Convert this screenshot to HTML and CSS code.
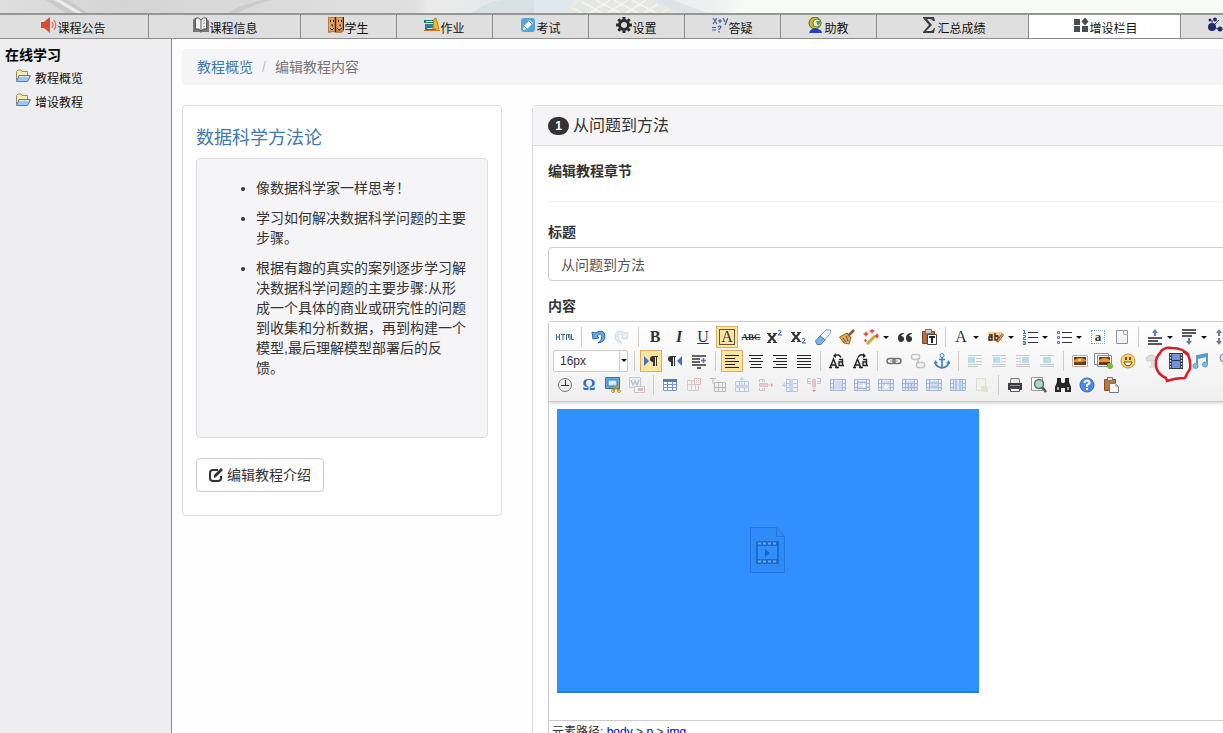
FILE: index.html
```html
<!DOCTYPE html>
<html lang="zh-CN">
<head>
<meta charset="utf-8">
<title>增设栏目</title>
<link rel="stylesheet" href="styles.css">
</head>
<body>
<svg class="defs" aria-hidden="true">
  <symbol id="grid" viewBox="0 0 16 16"><path fill="#e3eaf8" d="M0 2h16v12H0z"/><path fill="none" stroke="#93a9d0" d="M.500 2.500h15v11H.500zM3.500 2v12M12.500 2v12M0 6.500h3M0 10.500h3M13 6.500h3M13 10.500h3"/><path fill="#cbd7ee" d="M4 4h8v8H4z"/></symbol>
  <symbol id="folder" viewBox="0 0 16 14"><path fill="#f8edb0" stroke="#9a9160" d="M1.500 11V2.500L3 1h3l1 1.500h5.500V6"/><path fill="#9ccaf7" stroke="#4a7db5" d="M1.500 12.500L4 6.500h11.500L12.500 12.500z"/><path stroke="#d6ecff" d="M4.500 7.500h9"/></symbol>
</svg>
<header>
  <svg class="banner" viewBox="0 0 1223 13" preserveAspectRatio="none" aria-hidden="true">
    <defs><linearGradient id="bg"><stop offset="0" stop-color="#dedede"/><stop offset=".1" stop-color="#d4d4d4"/><stop offset=".2" stop-color="#dadada"/><stop offset=".34" stop-color="#e0e0e0"/><stop offset=".35" stop-color="#ebebeb"/><stop offset=".4" stop-color="#e6e9ea"/><stop offset=".58" stop-color="#edf0f0"/><stop offset=".61" stop-color="#f7faf6"/><stop offset="1" stop-color="#f8faf8"/></linearGradient></defs>
    <path fill="url(#bg)" d="M0 0h1223v13H0z"/>
    <path fill="#c9c9c9" d="M46 0h8l22 13H66zM62 0h6l20 13h-6z"/><path fill="#ececec" d="M54 0h6l22 13h-6z"/>
    <path fill="#cccccc" d="M228 13q14-9 34-13h10q-20 5-34 13z"/>
    <path fill="#d9e0e4" d="M472 13q12-10 28-13h34v13z"/><path fill="#e0e8ed" d="M534 0h42l-14 13h-28z"/><path fill="#dde3e6" d="M652 0h20l36 13h-30z"/>
    <path fill="#e5e7e1" d="M560 13L582 0h70l26 13z"/><path fill="none" stroke="#f4f5f0" stroke-width="1.500" d="M572 8l10 5M582 2l20 11M596 0l24 13M614 0l24 13M632 0l24 13M590 13l20-13M608 13l20-13M626 13l20-13M644 13l14-9M662 13l6-4"/>
  </svg>
  <nav class="tabs" aria-label="课程">
    <a class="tab wide" href="#"><svg viewBox="0 0 16 16"><path fill="#dc4b35" d="M0 5h3l6-5v16l-6-5H0z"/><path fill="none" stroke="#e0705c" stroke-width="1.300" d="M11 5q2 3 0 6M13 3q3.500 5 0 10"/></svg><span>课程公告</span></a>
    <a class="tab wide" href="#"><svg viewBox="0 0 16 16"><path fill="#777" d="M0 3l2-2v11h12V2l2 2v11H9l-1 1-1-1H0z"/><path fill="#f4f4f4" stroke="#555" d="M2.500 1Q6 0 8 3q2-3 5.500-2v11Q10 11 8 14q-2-3-5.500-2z"/><path stroke="#555" d="M8 3v11"/><path stroke="#aaa" d="M10 4l2-1M10 7l2-1M10 10l2-1"/></svg><span>课程信息</span></a>
    <a class="tab" href="#"><svg viewBox="0 0 16 16"><path fill="#b87b40" d="M0 0h16v14l-3 2H8l-3-1-5 1z"/><path fill="#e0a566" d="M1 1h5v13H1zM9 1h5v12H9z"/><path fill="none" stroke="#3b2212" d="M7.500 0v15M15.500 0v13M2.500 3v2M5.500 3v2M10.500 3v2M13.500 3v2M4 7v2h1M12 7v2h1M2 11l2 2 2-2M9 11l2 2 3-2"/></svg><span>学生</span></a>
    <a class="tab" href="#"><svg viewBox="0 0 16 16"><path fill="#247b64" d="M0 3h10v3H0zM1 10h11v3H1z"/><path fill="#2f7f98" d="M1 7h9v3H1z"/><path fill="#d8ead8" d="M2 4h7v1H2zM3 11h7v1H3z"/><path fill="#f3ba28" stroke="#b9802a" d="M10 2l2-1 3 11H9z"/><path fill="#d8702c" d="M0 13h16v1H0z"/></svg><span>作业</span></a>
    <a class="tab" href="#"><svg viewBox="0 0 16 16"><rect x="1" y="1" width="14" height="14" rx="3" fill="#55a5dc"/><path fill="#fff" d="M4 9l6-6 3 3-6 6-4 1z"/><path stroke="#55a5dc" d="M4 9l3 3M9 4l3 3"/></svg><span>考试</span></a>
    <a class="tab" href="#"><svg viewBox="0 0 16 16"><circle cx="8" cy="8" r="4.500" fill="none" stroke="#2d2d31" stroke-width="3"/><path stroke="#2d2d31" stroke-width="3" d="M8 0v3M8 13v3M0 8h3M13 8h3M2.300 2.300l2 2M11.700 11.700l2 2M13.700 2.300l-2 2M2.300 13.700l2-2"/></svg><span>设置</span></a>
    <a class="tab" href="#"><svg viewBox="0 0 16 16"><path fill="none" stroke="#3d5c99" stroke-width="1.200" d="M1 1l4 6M5 1L1 7M6 4h4M8 2v4M11 1l2 4M16 1l-3 7M0 10.500h4M0 13h4M6 10q2-2 3 0 0 1-2 2v1M7 14v1.500"/></svg><span>答疑</span></a>
    <a class="tab" href="#"><svg viewBox="0 0 16 16"><circle cx="7" cy="6" r="6" fill="#c5b535" stroke="#6c671c"/><circle cx="9" cy="6" r="4" fill="#e8eed9" stroke="#678256"/><path fill="#1e46b8" d="M1 16q1-4 6-5l3 1q4 1 4 4z"/><path fill="#5f9e4b" d="M8 4h4v3l-2 2z"/></svg><span>助教</span></a>
    <a class="tab wide" href="#"><svg viewBox="0 0 16 16"><path fill="#3c3e46" d="M2 0h11l1 4h-2q-1-2-3-2H6l5 6-6 6h5q2 0 3-3h1l-1 5H2v-1l6-7-6-7z"/></svg><span>汇总成绩</span></a>
    <a class="tab wide active" href="#" aria-current="page"><svg viewBox="0 0 16 16"><path fill="#474b54" d="M1 2h6v6H1zM1 9h6v6H1zM9 9h6v6H9zM12 .500L15.500 4.500 12 8.500 8.500 4.500z"/></svg><span>增设栏目</span></a>
    <a class="tab last" href="#" aria-label="更多"><svg viewBox="0 0 16 16"><path stroke="#26326e" d="M5 10l7-7M5 10V3M5 10l10 3"/><circle cx="5" cy="10" r="4" fill="#202b72"/><circle cx="3" cy="3" r="1.500" fill="#202b72"/><circle cx="8" cy="2.500" r="2" fill="#202b72"/><circle cx="13" cy="12" r="2.500" fill="#202b72"/></svg></a>
  </nav>
</header>
<div class="shell">
  <aside class="sidebar">
    <h2>在线学习</h2>
    <a href="#"><svg viewBox="0 0 16 14"><use href="#folder"/></svg>教程概览</a>
    <a href="#"><svg viewBox="0 0 16 14"><use href="#folder"/></svg>增设教程</a>
  </aside>
  <main>
    <nav class="breadcrumb" aria-label="位置"><a href="#">教程概览</a><span class="slash">/</span><span>编辑教程内容</span></nav>
    <div class="columns">
      <section class="intro">
        <h3><a href="#">数据科学方法论</a></h3>
        <div class="well">
          <ul>
            <li>像数据科学家一样思考！</li>
            <li>学习如何解决数据科学问题的主要步骤。</li>
            <li>根据有趣的真实的案列逐步学习解决数据科学问题的主要步骤:从形成一个具体的商业或研究性的问题到收集和分析数据，再到构建一个模型,最后理解模型部署后的反馈。</li>
          </ul>
        </div>
        <button class="edit" type="button"><svg viewBox="0 0 14 14"><path fill="none" stroke="#333" stroke-width="2" d="M9 2H4Q1 2 1 5v5q0 3 3 3h5q3 0 3-3V8"/><path fill="#333" d="M5 10V7l6-6 2 2-6 6zM12 0l2 2-1 1-2-2z"/></svg>编辑教程介绍</button>
      </section>
      <section class="panel">
        <h3 class="panel-head"><span class="badge">1</span>从问题到方法</h3>
        <form class="panel-body">
          <h4>编辑教程章节</h4>
          <hr>
          <label for="title">标题</label>
          <input id="title" type="text" value="从问题到方法">
          <label for="content">内容</label>
          <div class="editor">
            <div class="toolbar">
              <div class="row">
                <button type="button" aria-label="HTML"><svg class="html" viewBox="0 0 18 16"><path fill="none" stroke="#35708a" d="M.500 5v6M3.500 5v6M0 8h4M5 5.500h4M7 5v6M10.500 11V5.500h3.500V11M12.500 6v3M15.500 5v5.500H18"/></svg></button>
                <i class="sep"></i>
                <button type="button" aria-label="撤销"><svg viewBox="0 0 16 16"><path fill="#68a6e8" stroke="#2f6cad" d="M2 3l1 7 6-1-2-2q4-4 5 0 0 4-4 7 7-1 7-7-1-8-10-3z"/></svg></button>
                <button type="button" class="dim" aria-label="重做"><svg viewBox="0 0 16 16"><path fill="#c8dbed" stroke="#8ba8c4" d="M14 3l-1 7-6-1 2-2Q5 3 4 7q0 4 4 7-7-1-7-7 1-8 10-3z"/></svg></button>
                <i class="sep"></i>
                <button type="button" class="ltr"><b>B</b></button>
                <button type="button" class="ltr"><b><em>I</em></b></button>
                <button type="button" class="ltr"><u>U</u></button>
                <button type="button" class="ltr on" aria-pressed="true"><span class="boxed">A</span></button>
                <button type="button" class="ltr small"><s>ABC</s></button>
                <button type="button" aria-label="上标"><svg viewBox="0 0 16 16"><path stroke="#333" stroke-width="2" d="M1.500 5l7 8M8.500 5l-7 8"/><path stroke="#333" d="M0 4.500h4M6 4.500h4M0 13.500h4M6 13.500h4"/><path fill="none" stroke="#4054b0" d="M11 2q3-2 3 1l-3 3h4"/></svg></button>
                <button type="button" aria-label="下标"><svg viewBox="0 0 16 16"><path stroke="#333" stroke-width="2" d="M1.500 4l7 8M8.500 4l-7 8"/><path stroke="#333" d="M0 3.500h4M6 3.500h4M0 12.500h4M6 12.500h4"/><path fill="none" stroke="#4054b0" d="M11 10q3-2 3 1l-3 3h4"/></svg></button>
                <button type="button" aria-label="清除格式"><svg viewBox="0 0 16 16"><path fill="#f7f9fb" stroke="#8a9fb4" d="M5 7l6-6h4.500v3L10 11z"/><path fill="#7ab2e8" stroke="#4d80b5" d="M.500 12L5 7l5 4-4 4.500H2z"/></svg></button>
                <button type="button" aria-label="格式刷"><svg viewBox="0 0 16 16"><path stroke="#8a552a" stroke-width="2.500" d="M10 6l5-5"/><path fill="#dba951" stroke="#9c6c2b" d="M.500 8L8 4l4 5-2 6-5-1z"/><path stroke="#7c5321" d="M4 9l3 4M7 7l2 5M8 4l4 5"/></svg></button>
                <button type="button" class="combo" aria-label="自动排版"><svg viewBox="0 0 16 16"><path stroke="#d2a242" stroke-width="3" d="M4 15l8-8"/><path fill="#e04929" d="M3 2l1 2 2 1-2 1-1 2-1-2-2-1 2-1zM9 0l1 1 2 1-2 1-1 2-1-2-2-1 2-1zM14 4l1 2 1 1-1 1-1 2-1-2-2-1 2-1zM2 10l2 1-1 2-2-1z"/></svg><i class="caret"></i></button>
                <button type="button" aria-label="引用"><svg viewBox="0 0 16 16"><path fill="#333" d="M7 4Q1 4 1 9q0 4 3 4t3-3-3-3q1-2 3-2zM15 4Q9 4 9 9q0 4 3 4t3-3-3-3q1-2 3-2z"/></svg></button>
                <button type="button" aria-label="纯文本粘贴"><svg viewBox="0 0 16 16"><path fill="#b66e3a" stroke="#7a4422" d="M1.500 2.500h12v12h-12z"/><path fill="#ccc" stroke="#777" d="M4.500.500h6v4h-6z"/><path fill="#fff" stroke="#444" d="M6.500 5.500h9v10h-9z"/><path stroke="#222" stroke-width="2" d="M8 8h6M11 8v6"/></svg></button>
                <i class="sep"></i>
                <button type="button" class="combo ltr">A<i class="caret"></i></button>
                <button type="button" class="combo" aria-label="背景色"><svg viewBox="0 0 16 16"><path fill="#f5d08e" d="M0 3h14v9H0z"/><path fill="none" stroke="#222" stroke-width="1.300" d="M1 6h3v5H1V8h3M7 4v7h3V7H7"/><path stroke="#a14c20" stroke-width="2.500" d="M9 13l6-8"/><path stroke="#f2ba68" d="M10 12l5-7"/></svg><i class="caret"></i></button>
                <button type="button" class="combo" aria-label="有序列表"><svg viewBox="0 0 16 16"><path stroke="#333" d="M6 3.500h10M6 8.500h10M6 13.500h10"/><path fill="none" stroke="#456bc0" d="M1 1.500h1.500v3M1 4.500h3M1 6.500h2.500v2H1.500v2H4M1 12.500h2.500v3H1M1 14h2"/></svg><i class="caret"></i></button>
                <button type="button" class="combo" aria-label="无序列表"><svg viewBox="0 0 16 16"><path stroke="#333" d="M6 3.500h10M6 8.500h10M6 13.500h10"/><path fill="none" stroke="#6078c0" d="M1.500 2.500h2v2h-2zM1.500 7.500h2v2h-2zM1.500 12.500h2v2h-2z"/></svg><i class="caret"></i></button>
                <button type="button" class="ltr small"><span class="dotted">a</span></button>
                <button type="button" aria-label="清空文档"><svg viewBox="0 0 16 16"><path fill="#f2f3f4" stroke="#909498" d="M2.500 1.500h11v13h-11z"/><path fill="#fff" stroke="#b0b4b8" d="M9.500 1.500v4h4"/></svg></button>
                <i class="sep"></i>
                <button type="button" class="combo" aria-label="段前距"><svg viewBox="0 0 16 16"><path stroke="#222" stroke-width="1.500" d="M1 9h14M1 12h10M1 15h14"/><path fill="#6478b4" d="M7 7V4H5l3-4 3 4H9v3z"/></svg><i class="caret"></i></button>
                <button type="button" class="combo" aria-label="段后距"><svg viewBox="0 0 16 16"><path stroke="#222" stroke-width="1.500" d="M1 1h14M1 4h14M1 7h10"/><path fill="#6478b4" d="M7 9v3H5l3 4 3-4H9V9z"/></svg><i class="caret"></i></button>
                <button type="button" class="combo" aria-label="行间距"><svg viewBox="0 0 16 16"><path fill="#6478b4" d="M3 7V4H1l3-4 3 4H5v3zM3 9v3H1l3 4 3-4H5V9z"/><path stroke="#222" d="M9 2.500h7M9 7.500h7M9 12.500h7"/></svg><i class="caret"></i></button>
              </div>
              <div class="row">
                <span class="size"><select aria-label="字号"><option>16px</option></select><i class="caret"></i></span>
                <i class="sep"></i>
                <button type="button" class="on" aria-label="从左向右输入"><svg viewBox="0 0 16 16"><path fill="#3f72c2" d="M1 3l5 5-5 5z"/><path fill="#333" d="M10 9q-3 0-3-3t3-3h5v1h-1v9h-1V4h-1v9h-2z"/></svg></button>
                <button type="button" aria-label="从右向左输入"><svg viewBox="0 0 16 16"><path fill="#3f72c2" d="M15 3l-5 5 5 5z"/><path fill="#333" d="M4 9Q1 9 1 6t3-3h5v1H8v9H7V4H6v9H4z"/></svg></button>
                <button type="button" aria-label="首行缩进"><svg viewBox="0 0 16 16"><path stroke="#333" stroke-width="1.400" d="M1 3h14M1 6h8M1 9h8M1 12h14M6 15h4"/><path stroke="#6d6bb0" stroke-width="1.500" d="M10 7.500h5M12.500 5v5"/></svg></button>
                <i class="sep"></i>
                <button type="button" class="on" aria-label="左对齐"><svg viewBox="0 0 16 16"><path stroke="#222" d="M1 2.500h14M1 5.500h10M1 8.500h14M1 11.500h10M1 14.500h14"/></svg></button>
                <button type="button" aria-label="居中"><svg viewBox="0 0 16 16"><path stroke="#222" d="M1 2.500h14M3 5.500h10M1 8.500h14M3 11.500h10M2 14.500h12"/></svg></button>
                <button type="button" aria-label="右对齐"><svg viewBox="0 0 16 16"><path stroke="#222" d="M1 2.500h14M4 5.500h11M1 8.500h14M4 11.500h11M1 14.500h14"/></svg></button>
                <button type="button" aria-label="两端对齐"><svg viewBox="0 0 16 16"><path stroke="#222" d="M1 2.500h14M1 5.500h14M1 8.500h14M1 11.500h14M1 14.500h14"/></svg></button>
                <i class="sep"></i>
                <button type="button" aria-label="转大写"><svg viewBox="0 0 16 16"><path fill="none" stroke="#222" stroke-width="1.400" d="M1 15l3.500-9L8 15M2.500 12h4M0 14.500h3M6 14.500h4M10 6.500h3.500v6H15M13 9h-3v3.500h3M6 2.500q4-2 6 2"/><path fill="#222" d="M4 3l3-3v5z"/></svg></button>
                <button type="button" aria-label="转小写"><svg viewBox="0 0 16 16"><path fill="none" stroke="#222" stroke-width="1.400" d="M1 15l3.500-9L8 15M2.500 12h4M0 14.500h3M6 14.500h4M10 6.500h3.500v6H15M13 9h-3v3.500h3M5 4.500q2-4 6-2"/><path fill="#222" d="M13 3l-3-3v5z"/></svg></button>
                <i class="sep"></i>
                <button type="button" aria-label="链接"><svg viewBox="0 0 16 16"><rect x="1" y="5.500" width="8" height="5" rx="2.500" fill="none" stroke="#6e7074" stroke-width="1.500"/><rect x="7" y="5.500" width="8" height="5" rx="2.500" fill="none" stroke="#6e7074" stroke-width="1.500"/><path stroke="#999" d="M4 8h8"/></svg></button>
                <button type="button" class="dim" aria-label="取消链接"><svg viewBox="0 0 16 16"><rect x="1.500" y="1.500" width="8" height="5" rx="2" fill="none" stroke="#777" stroke-width="1.500"/><rect x="6.500" y="9.500" width="8" height="5" rx="2" fill="none" stroke="#777" stroke-width="1.500"/><path stroke="#777" stroke-width="1.500" d="M8 5v6"/></svg></button>
                <button type="button" aria-label="锚点"><svg viewBox="0 0 16 16"><circle cx="8" cy="2.500" r="2" fill="none" stroke="#3f80be"/><path fill="none" stroke="#3f80be" stroke-width="1.600" d="M8 4v11M5 6.500h6M1 9q1 5 7 6 6-1 7-6"/><path fill="#3f80be" d="M0 11l1-4 3 3zM16 11l-1-4-3 3z"/></svg></button>
                <i class="sep"></i>
                <button type="button" class="dim" aria-label="默认"><svg viewBox="0 0 16 16"><path stroke="#789" d="M1 2.500h14M9 5.500h6M9 8.500h6M1 11.500h14M1 13.500h10"/><path fill="#61b9ca" d="M1 4h7v6H1z"/></svg></button>
                <button type="button" class="dim" aria-label="左浮动"><svg viewBox="0 0 16 16"><path stroke="#789" d="M1 2.500h14M10 5.500h5M10 8.500h5M1 11.500h14M1 13.500h14"/><path fill="#61b9ca" d="M2 4h7v6H2z"/></svg></button>
                <button type="button" class="dim" aria-label="右浮动"><svg viewBox="0 0 16 16"><path stroke="#789" d="M1 2.500h14M1 5.500h5M1 8.500h5M1 11.500h14M1 13.500h14"/><path fill="#61b9ca" d="M7 4h7v6H7z"/></svg></button>
                <button type="button" class="dim" aria-label="图片居中"><svg viewBox="0 0 16 16"><path stroke="#789" d="M1 2.500h14M1 11.500h14M1 13.500h14"/><path fill="#61b9ca" d="M4 4h8v6H4z"/></svg></button>
                <i class="sep"></i>
                <button type="button" aria-label="单图上传"><svg viewBox="0 0 16 16"><path fill="#fff" stroke="#c9b09a" d="M.500 2.500h15v11H.500z"/><path fill="#71351a" d="M2 4h12v8H2z"/><path fill="#e48b2d" d="M2 7q6-4 12 0v1q-6 2-12 1z"/><path fill="#ffd865" d="M6 6h3v2H6z"/></svg></button>
                <button type="button" aria-label="多图上传"><svg class="photos" viewBox="0 0 20 16"><path fill="#fff" stroke="#888" d="M.500.500h14v11H.500zM3.500 2.500h14v11h-14z"/><path fill="#71351a" d="M5 4h11v8H5z"/><path fill="#eb9735" d="M5 7q6-4 11 0v2H5z"/><circle cx="16" cy="13" r="3" fill="#75bd3c"/></svg></button>
                <button type="button" aria-label="表情"><svg viewBox="0 0 16 16"><circle cx="8" cy="8" r="7" fill="#fbd36b" stroke="#cf923a"/><path fill="#704719" d="M5 4h2v3H5zM9 4h2v3H9z"/><path fill="#fff" stroke="#704719" d="M4 9h8q-1 4-4 4T4 9z"/></svg></button>
                <button type="button" class="dim" aria-label="涂鸦"><svg viewBox="0 0 16 16"><path fill="#b8b8b8" stroke="#888" d="M2 5q5-6 11 0l-2 3H3z"/><path fill="#bbb" d="M7 8h3v6H7zM5 13h8v2H5z"/></svg></button>
                <button type="button" class="marked" aria-label="视频"><svg viewBox="0 0 16 16"><path fill="#333a4a" d="M1 0h14v16H1z"/><path fill="#7191da" d="M4 1h8v6H4zM4 8h8v7H4z"/><path stroke="#fff" stroke-width="1.300" stroke-dasharray="1.500 1.500" d="M2.500 1v14M13.500 1v14"/></svg><svg class="ring" viewBox="0 0 38 38"><path fill="none" stroke="#d81e28" stroke-width="2.500" stroke-linejoin="round" d="M35 10Q30 2 18 2 9 1 6 7 1 12 2 20q1 8 10 12l1 3q8-3 18-3 2-5 5-9 1-8-2-14l-5-4"/></svg></button>
                <button type="button" aria-label="音乐"><svg viewBox="0 0 16 16"><path fill="none" stroke="#569fca" stroke-width="2" d="M5 13V3l10-2v10M5 5l10-2"/><circle cx="3.500" cy="13" r="2.500" fill="#80bfe4" stroke="#569fca"/><circle cx="13" cy="11.500" r="2.500" fill="#80bfe4" stroke="#569fca"/></svg></button>
                <button type="button" aria-label="地图"><svg viewBox="0 0 16 16"><circle cx="8" cy="5" r="4" fill="#d8e3fc" stroke="#6783cb"/><path stroke="#6783cb" d="M8 9v6"/></svg></button>
              </div>
              <div class="row">
                <button type="button" aria-label="时间"><svg viewBox="0 0 16 16"><circle cx="8" cy="8" r="6.500" fill="#ececec" stroke="#777"/><path fill="none" stroke="#333" d="M8.500 3v5.500H4M8 8.500h4"/></svg></button>
                <button type="button" class="omega">Ω</button>
                <button type="button" aria-label="截图"><svg viewBox="0 0 16 16"><path fill="#60aee1" stroke="#396f9c" d="M.500.500h14v11H.500z"/><path fill="#ccecff" stroke="#367fae" d="M3 3h9v6H3z"/><path stroke="#c89122" stroke-width="1.500" d="M8 8l6 6M14 8l-6 6"/><circle cx="8" cy="14" r="1.500" fill="none" stroke="#c89122"/><circle cx="14" cy="14" r="1.500" fill="none" stroke="#c89122"/></svg></button>
                <button type="button" class="dim" aria-label="图片转存"><svg viewBox="0 0 16 16"><path fill="#dcebf8" stroke="#719ac2" d="M.500.500h11v10H.500z"/><path fill="none" stroke="#4679af" stroke-width="1.300" d="M2 3l2 5 2-4 2 4 2-5"/><path fill="#fff" stroke="#888" d="M5.500 9.500h10v6h-10z"/><path fill="#c66" d="M9 11h5v3H9z"/></svg></button>
                <i class="sep"></i>
                <button type="button" aria-label="插入表格"><svg viewBox="0 0 16 16"><path fill="#fff" stroke="#7b96ca" d="M1.500 2.500h13v11h-13zM5.500 3v10M10.500 3v10M2 7.500h12M2 10.500h12"/><path fill="#537bc7" d="M1 2h14v3H1z"/></svg></button>
                <button type="button" class="dim" aria-label="删除表格"><svg viewBox="0 0 16 16"><path fill="none" stroke="#99a" d="M1.500 3.500h11v10h-11zM5.500 3v10M9.500 3v10M2 7.500h10"/><path fill="#fbe4e4" stroke="#d46a6a" d="M8.500 1.500h6v6h-6zM10 3l3 3M13 3l-3 3"/></svg></button>
                <button type="button" class="dim" aria-label="表前行"><svg viewBox="0 0 16 16"><path fill="none" stroke="#667" d="M0 1.500h6M3 1v6M4.500 5.500h11v9h-11zM8.500 5v10M12.500 5v10M4 10.500h12"/></svg></button>
                <button type="button" class="dim" aria-label="前插入行"><svg viewBox="0 0 16 16"><path fill="none" stroke="#678bba" d="M1.500 4.500h13v10h-13zM5.500 4v11M10.500 4v11M8 0v8"/><path fill="#7aaedc" d="M1 8h14v3H1zM5 3l3-3 3 3z"/></svg></button>
                <button type="button" class="dim" aria-label="删除行"><svg viewBox="0 0 16 16"><path fill="none" stroke="#887f96" d="M1.500 5V2.500h5V5M1.500 11v2.500h5V11M4.500 2v3M4.500 11v3"/><path fill="#ee8d96" stroke="#d46a76" d="M1.500 6.500h8v3h-8z"/><path stroke="#d46a76" d="M10 8h5M13 6l2 2-2 2"/></svg></button>
                <button type="button" class="dim" aria-label="前插入列"><svg viewBox="0 0 16 16"><path fill="none" stroke="#5a82b5" d="M4.500 2.500h11v12h-11zM5 6.500h10M5 10.500h10M0 8.500h5"/><path fill="#7aaedc" d="M7 2h4v12H7zM0 8l3-3v6z"/></svg></button>
                <button type="button" class="dim" aria-label="删除列"><svg viewBox="0 0 16 16"><path fill="none" stroke="#887f96" d="M5 1.500H1.500v5H5M11 1.500h3.500v5H11M1 4.500h4M11 4.500h4"/><path fill="#ee8d96" stroke="#d46a76" d="M6.500 2.500h3v7h-3z"/><path stroke="#d46a76" d="M8 10v5M6 13l2 2 2-2"/></svg></button>
                <button type="button" class="grid" aria-label="合并单元格"><svg viewBox="0 0 16 16"><use href="#grid"/></svg></button>
                <button type="button" class="grid" aria-label="右合并"><svg viewBox="0 0 16 16"><use href="#grid"/><path stroke="#93a9d0" d="M4 5.500h8M4 11.500h8"/><path fill="#fff" d="M5 8h4V6l3 2.500L9 11V9H5z"/></svg></button>
                <button type="button" class="grid" aria-label="下合并"><svg viewBox="0 0 16 16"><use href="#grid"/><path stroke="#93a9d0" d="M4 6.500h8"/><path fill="#fff" d="M7 7h2v2h2l-3 3-3-3h2z"/></svg></button>
                <button type="button" class="grid" aria-label="拆分单元格"><svg viewBox="0 0 16 16"><use href="#grid"/><path stroke="#8ba3cc" d="M6.500 6v8M9.500 6v8M1 6.500h14M1 10.500h14"/></svg></button>
                <button type="button" class="grid" aria-label="拆分行"><svg viewBox="0 0 16 16"><use href="#grid"/><path fill="#9dc3e6" d="M4 5h8v2H4zM4 9h8v2H4z"/></svg></button>
                <button type="button" class="grid" aria-label="拆分列"><svg viewBox="0 0 16 16"><use href="#grid"/><path stroke="#9dc3e6" stroke-width="2" d="M6 3v10M10 3v10"/></svg></button>
                <button type="button" class="dim" aria-label="图表"><svg viewBox="0 0 16 16"><path fill="#f4f4df" stroke="#bbb" d="M2.500 1.500h9v12h-9z"/><path fill="#c9d795" d="M7 9h7v6H7z"/></svg></button>
                <i class="sep"></i>
                <button type="button" aria-label="打印"><svg viewBox="0 0 16 16"><path fill="#e9e9e9" stroke="#777" d="M4 1.500h8l1 6H3z"/><path fill="#3b3d40" d="M1 6h14v7H1z"/><path fill="#fff" stroke="#555" d="M3.500 11.500h9v3h-9z"/><path stroke="#999" d="M3 8.500h10"/></svg></button>
                <button type="button" aria-label="预览"><svg viewBox="0 0 16 16"><path fill="#fff" stroke="#999" d="M.500.500h11v13H.500z"/><circle cx="8" cy="7" r="4.500" fill="#afd8bd" stroke="#537674" stroke-width="1.500"/><path stroke="#555" stroke-width="2.500" d="M11 10l4 5"/></svg></button>
                <button type="button" aria-label="查找替换"><svg viewBox="0 0 16 16"><path fill="#252628" d="M2 1h4v4l1 1h2l1-1V1h4v4l2 5v5h-6v-4H6v4H0v-5l2-5z"/><path fill="#aaa" d="M2 10h2v3H2zM12 10h2v3h-2z"/></svg></button>
                <button type="button" aria-label="帮助"><svg viewBox="0 0 16 16"><circle cx="8" cy="8" r="7" fill="#4b8be7" stroke="#2868c3"/><path fill="none" stroke="#fff" stroke-width="2" d="M5.500 6q0-2.500 2.500-2.500T10.500 6Q10 7 8 8v2M8 11v2"/></svg></button>
                <button type="button" aria-label="粘贴"><svg viewBox="0 0 16 16"><path fill="#ba743e" stroke="#84502a" d="M1.500 2.500h11v11h-11z"/><path fill="#ddd" stroke="#777" d="M4.500.500h5v3h-5z"/><path fill="#fff" stroke="#777" d="M6.500 6.500h6l3 3v6h-9z"/><path fill="#bbb" d="M12 6v4h4z"/></svg></button>
              </div>
            </div>
            <div class="canvas" id="content">
              <div class="video" role="img" aria-label="视频">
                <svg viewBox="0 0 36 48"><path fill="#2f8bf7" stroke="#2478dd" d="M.500 1.500h26l8 9v36H.500z"/><path fill="none" stroke="#2478dd" d="M26.500 1.500v9h8"/><path fill="#1f6bc9" d="M6 15h23v23H6z"/><path fill="#3090ff" d="M8 20h19v13H8z"/><path stroke="#68a9ef" stroke-width="2" stroke-dasharray="3 2" d="M8 17.500h20M8 35.500h20"/><path fill="#1965c2" d="M15 23l5 4-5 4z"/></svg>
              </div>
            </div>
            <div class="path">元素路径: <a href="#">body</a> &gt; <a href="#">p</a> &gt; <a href="#">img</a></div>
          </div>
        </form>
      </section>
    </div>
  </main>
</div>
</body>
</html>
```
FILE: styles.css
```css
* { box-sizing: border-box; }
html, body { height: 100%; }
body {
  margin: 0;
  overflow: hidden;
  display: flex;
  flex-direction: column;
  background: #fefefe;
  color: #333;
  font: 14px/20px "Liberation Sans", "Noto Sans CJK SC", sans-serif;
}
h2, h3, h4, ul { margin: 0; font-weight: normal; }
a { color: #4179ae; text-decoration: none; }
svg { display: block; flex: none; width: 16px; height: 16px; }
button, input, select { font: inherit; color: inherit; margin: 0; }
.defs { position: absolute; width: 0; height: 0; }
header { flex: none; }
.banner { width: 100%; height: 13px; }

.tabs {
  display: flex;
  height: 26px;
  margin-left: -3px;
  overflow: hidden;
  border-top: 2px solid #969696;
  border-bottom: 1px solid #8b8b8b;
}
.tab {
  flex: 0 0 96px;
  display: flex;
  justify-content: center;
  align-items: flex-start;
  padding-top: 2px;
  border-right: 1px solid #8b8b8b;
  background: #dfdfdf;
  color: #111;
  font-size: 12px;
  line-height: 24px;
  white-space: nowrap;
}
.tab.wide { flex-basis: 152px; padding-left: 2px; }
.tab.active { background: #fff; }
.tab.last { flex: 1; justify-content: flex-end; border-right: 0; }

.shell { flex: 1; display: flex; min-height: 0; }
.sidebar {
  flex: 0 0 172px;
  padding: 6px 5px;
  border-right: 1px solid #8b8b8b;
  background: #eeedef;
}
.sidebar h2 { color: #000; font-size: 14px; font-weight: bold; }
.sidebar a {
  display: flex;
  gap: 4px;
  height: 24px;
  padding: 4px 0 0 10px;
  color: #111;
  font-size: 12px;
  line-height: 20px;
}
.sidebar svg { height: 14px; }

main { flex: 0 0 calc(100% - 112px); padding: 10px; }
.breadcrumb {
  display: flex;
  gap: 9px;
  margin-bottom: 20px;
  padding: 8px 15px;
  border-radius: 4px;
  background: #f5f4f6;
  color: #777;
}
.breadcrumb .slash { color: #bbb; }
.columns { display: flex; align-items: flex-start; gap: 30px; }
.intro {
  flex: 0 0 320px;
  padding: 20px 13px 23px;
  border: 1px solid #dddbe0;
  border-radius: 4px;
  background: #fff;
}
.intro h3 { margin-bottom: 8px; font-size: 18px; line-height: 24px; }
.well {
  min-height: 280px;
  padding: 19px;
  border: 1px solid #dfdde2;
  border-radius: 4px;
  background: #f5f4f6;
}
.well ul { padding-left: 40px; }
.well li { margin-bottom: 10px; }
.edit {
  display: flex;
  align-items: center;
  gap: 4px;
  height: 34px;
  margin-top: 20px;
  padding: 0 12px;
  border: 1px solid #ccc;
  border-radius: 4px;
  background: #fff;
}
.edit svg { width: 14px; height: 14px; }

.panel {
  flex: 1;
  min-width: 0;
  border: 1px solid #dddbe0;
  border-radius: 4px;
  background: #fff;
}
.panel-head {
  display: flex;
  align-items: center;
  gap: 4px;
  height: 40px;
  padding: 0 15px;
  border-bottom: 1px solid #dddbe0;
  background: #f5f4f6;
  font-size: 16px;
}
.badge {
  width: 21px;
  border-radius: 10px;
  background: #333;
  color: #fff;
  font-size: 12px;
  font-weight: bold;
  line-height: 18px;
  text-align: center;
}
.panel-body { padding: 15px; }
.panel-body h4 { font-size: 14px; font-weight: bold; }
.panel-body hr { margin: 20px 0; border: 0; border-top: 1px solid #eee; }
.panel-body label { display: block; margin-bottom: 5px; font-weight: bold; }
.panel-body input {
  display: block;
  width: 100%;
  height: 34px;
  margin-bottom: 15px;
  padding: 6px 12px;
  border: 1px solid #ccc;
  border-radius: 4px;
  background: #fff;
  color: #555;
}

.editor { border: 1px solid #ccc; border-radius: 4px; }
.toolbar {
  height: 80px;
  padding: 3px 4px;
  overflow: hidden;
  border-bottom: 1px solid #ccc;
  background: linear-gradient(#fff, #efefef);
  box-shadow: 0 1px 4px #ccc;
}
.row { display: flex; align-items: center; height: 24px; }
.toolbar button {
  flex: none;
  display: flex;
  align-items: center;
  justify-content: center;
  width: 22px;
  height: 22px;
  margin: 0 1px;
  padding: 0;
  border: 0;
  background: none;
  color: #333;
}
.toolbar button.combo { width: 32px; gap: 4px; }
.toolbar button.on { border: 1px solid #dcac6c; background: #ffe69f; }
.toolbar button.dim svg { opacity: 0.4; }
.toolbar button.grid svg { opacity: 0.8; }
.toolbar button.ltr { font: 16px/18px "Liberation Serif", serif; }
.toolbar button.combo.ltr { gap: 6px; }
.toolbar button.small { font-size: 9px; font-weight: bold; }
.toolbar button.omega { color: #3b68b8; font: bold 16px/20px "Liberation Serif", serif; }
.toolbar .html { width: 18px; }
.toolbar .photos { width: 20px; }
.boxed { width: 16px; border: 1px solid #75502c; line-height: 14px; }
.dotted { width: 14px; border: 1px dotted #7aa4c9; font-size: 13px; line-height: 12px; }
.sep { flex: none; width: 1px; height: 20px; margin: 0 4px; background: #ccc; }
.caret {
  border: 3px solid transparent;
  border-top-color: #111;
  border-bottom: 0;
}
.size { position: relative; flex: none; width: 75px; margin-right: 2px; }
.size select {
  display: block;
  width: 100%;
  height: 22px;
  padding: 0 6px;
  appearance: none;
  border: 1px solid #ccc;
  border-radius: 2px;
  background: #fff;
  font-size: 12px;
}
.size::after {
  content: "";
  position: absolute;
  top: 1px;
  right: 8px;
  bottom: 1px;
  border-left: 1px solid #ccc;
}
.size .caret { position: absolute; top: 9px; right: 1px; }
.marked { position: relative; }
.ring {
  position: absolute;
  z-index: 1;
  top: -4px;
  left: -11px;
  width: 38px;
  height: 38px;
}
.canvas { height: 318px; padding: 7px 8px; }
.video {
  display: flex;
  align-items: center;
  justify-content: center;
  width: 422px;
  height: 284px;
  border-bottom: 2px solid #2979d5;
  background: #3090ff;
}
.video svg { width: 36px; height: 48px; }
.path {
  padding: 1px 3px;
  border-top: 1px solid #ccc;
  font-size: 12px;
}
.path a { color: #00c; }
```
